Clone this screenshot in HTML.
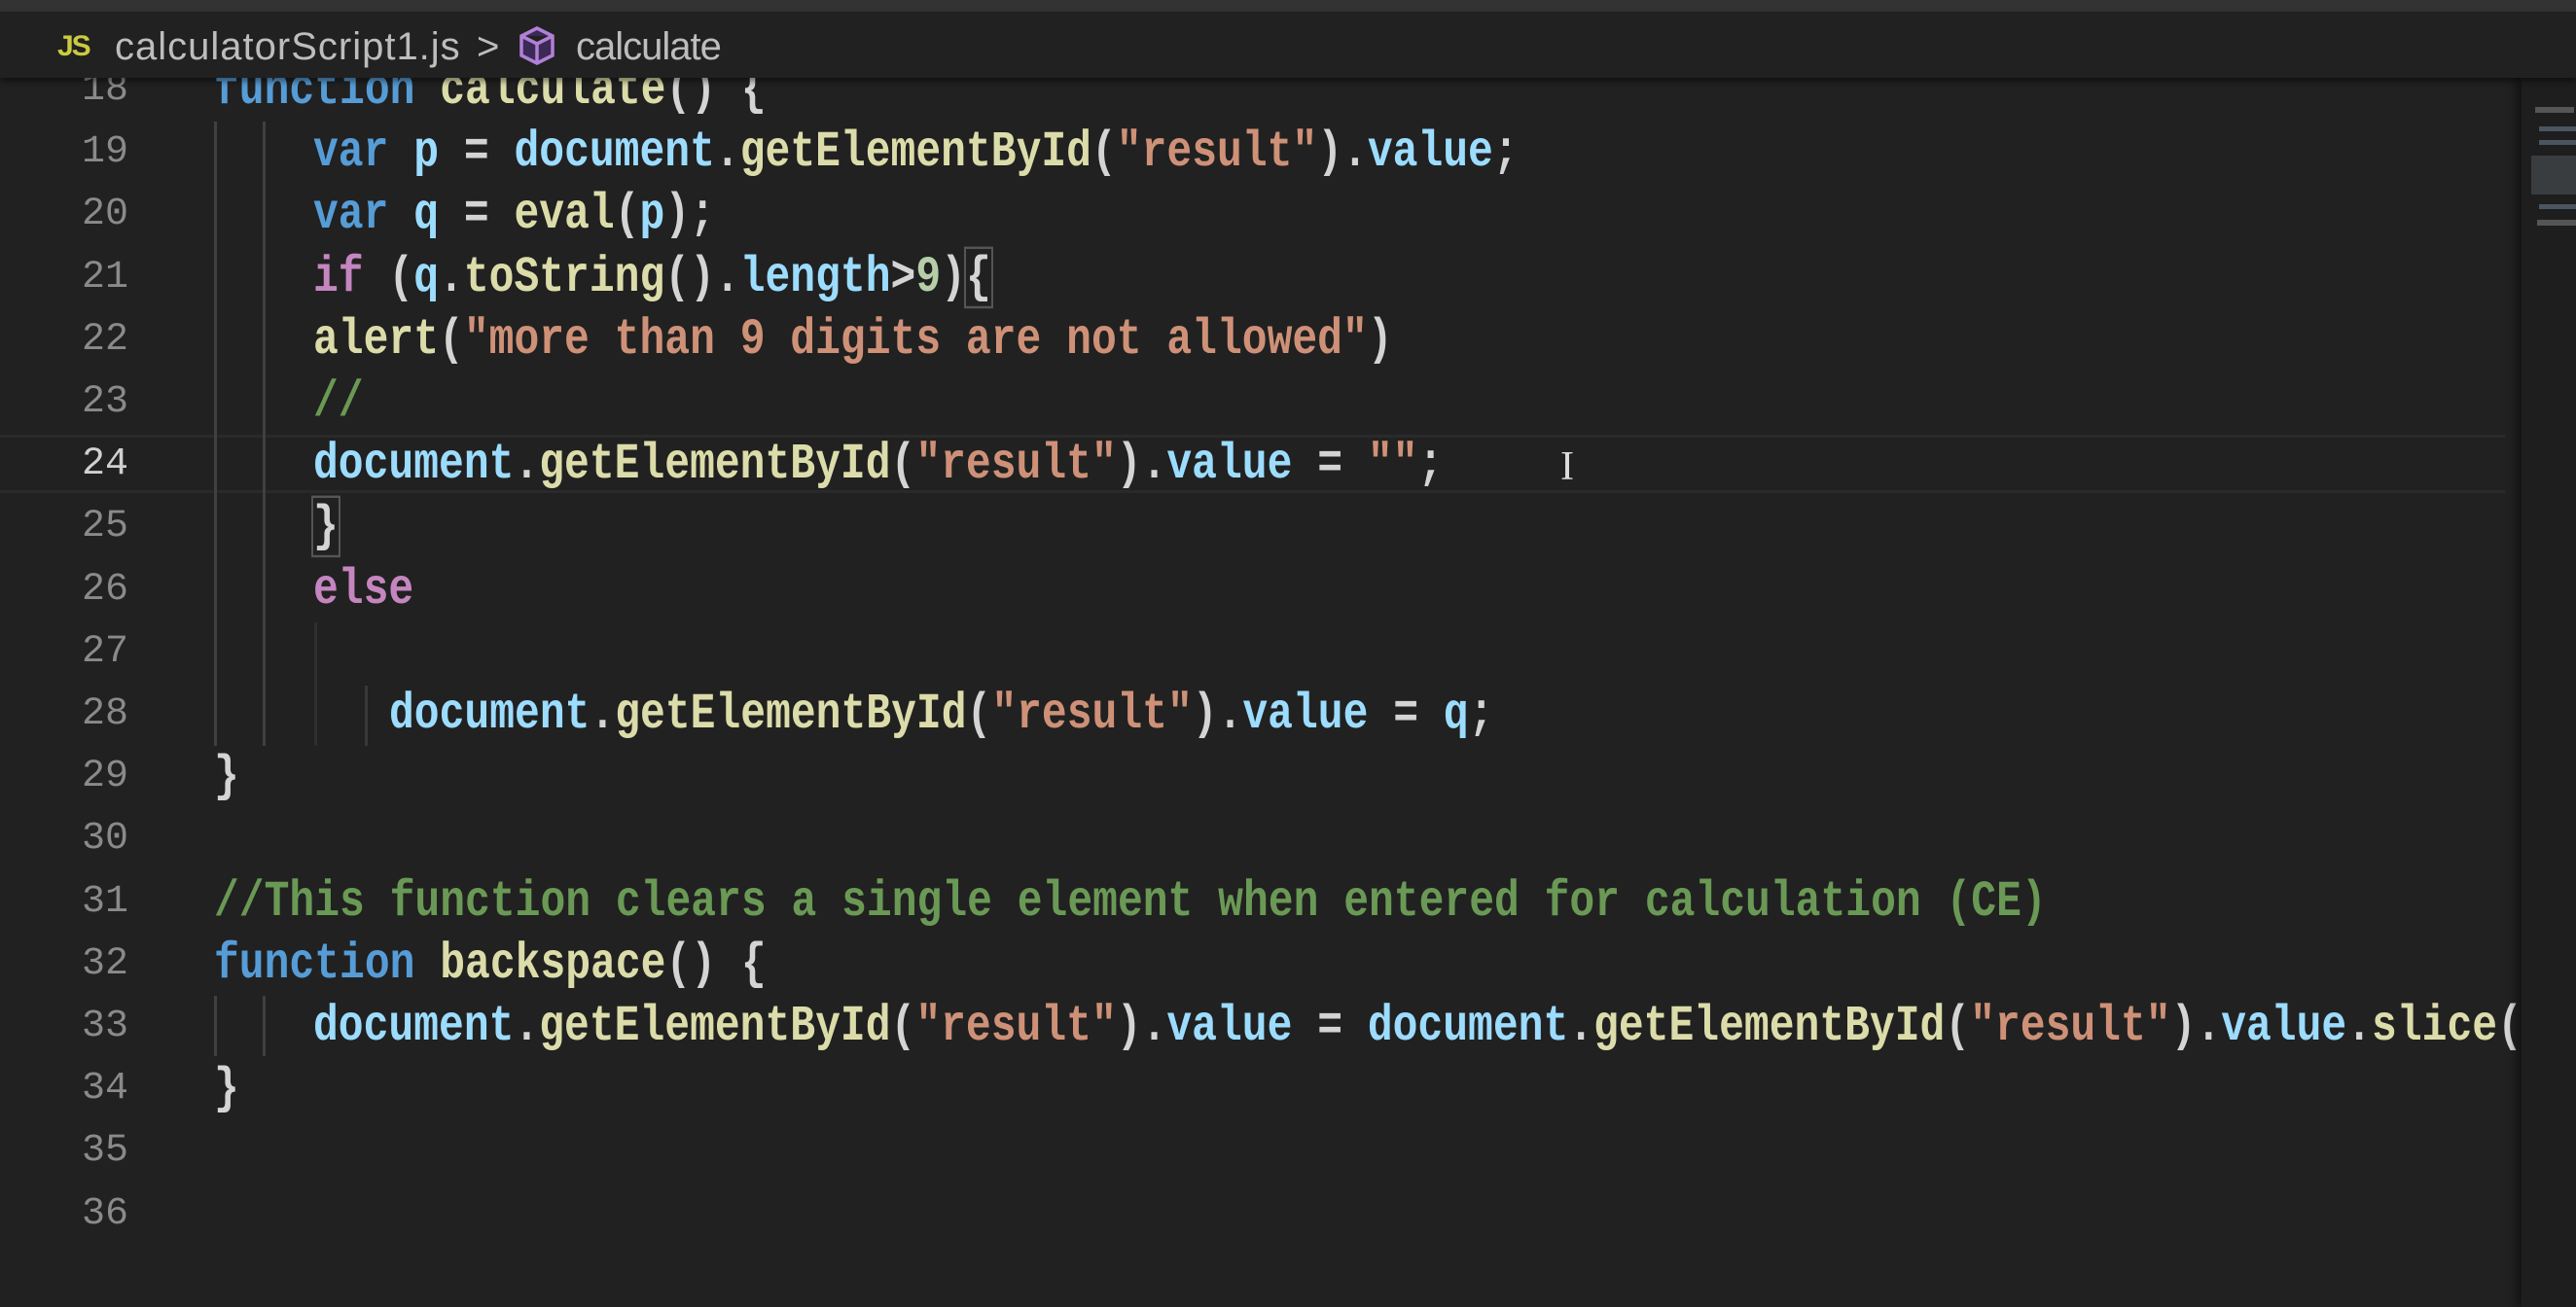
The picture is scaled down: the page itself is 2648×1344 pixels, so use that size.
<!DOCTYPE html>
<html><head><meta charset="utf-8"><style>
html,body{margin:0;padding:0;width:2648px;height:1344px;overflow:hidden;background:#212121;}
.top{position:absolute;left:0;top:0;width:2648px;height:12px;background:#333;}
.bc{position:absolute;left:0;top:12px;width:2648px;height:68px;background:#212121;box-shadow:0 4px 6px rgba(0,0,0,0.45);z-index:5;font-family:"Liberation Sans",sans-serif;font-size:40px;color:#bdbdbd;}
.bc span{position:absolute;top:14px;letter-spacing:-1px;}
.ln{position:absolute;left:0;width:132px;text-align:right;font-family:"Liberation Mono",monospace;font-size:40px;color:#8a8a8a;height:64px;line-height:64px;}
.c{position:absolute;font-family:"Liberation Mono",monospace;font-weight:bold;font-size:43px;height:64px;line-height:64px;white-space:pre;color:#d4d4d4;transform:scaleY(1.2);transform-origin:0 50%;}
.k{color:#569cd6}.v{color:#9cdcfe}.f{color:#dcdcaa}.s{color:#ce9178}.m{color:#6a9955}.p{color:#c586c0}.n{color:#b5cea8}
.g{position:absolute;width:3px;background:#404040;}
.cur{position:absolute;left:0;top:447px;width:2575px;height:60px;border-top:3px solid #2a2a2a;border-bottom:3px solid #2a2a2a;box-sizing:border-box;}
.mini{position:absolute;left:2592px;top:80px;width:56px;height:1264px;background:#1e1e1e;box-shadow:-6px 0 8px rgba(0,0,0,0.4);}
</style></head><body>
<div class="top"></div>
<div class="bc">
<span style="left:59px;color:#cbcb41;font-weight:bold;font-size:30px;top:19px;letter-spacing:-2px">JS</span>
<span style="left:118px;letter-spacing:1px">calculatorScript1.js</span>
<span style="left:490px;">&gt;</span>
<svg style="position:absolute;left:532px;top:14px" width="40" height="42" viewBox="0 0 40 42"><path d="M20 3 L36 11 L36 31 L20 39 L4 31 L4 11 Z M4 11 L20 19 L36 11 M20 19 L20 39" fill="#3a2a55" stroke="#b180d7" stroke-width="3.5"/></svg>
<span style="left:592px;">calculate</span>
</div>
<div class="cur"></div>
<div class="g" style="left:220px;top:125px;height:642px"></div>
<div class="g" style="left:270px;top:125px;height:642px"></div>
<div class="g" style="left:323px;top:640px;height:127px;background:#2e2e2e"></div>
<div class="g" style="left:375px;top:705px;height:62px;background:#383838"></div>
<div class="g" style="left:220px;top:1024px;height:62px"></div>
<div class="g" style="left:270px;top:1024px;height:62px"></div>

<div class="ln" style="top:61px">18</div>
<div class="ln" style="top:125px">19</div>
<div class="ln" style="top:189px">20</div>
<div class="ln" style="top:254px">21</div>
<div class="ln" style="top:318px">22</div>
<div class="ln" style="top:382px">23</div>
<div class="ln" style="top:446px;color:#d0d0d0">24</div>
<div class="ln" style="top:510px">25</div>
<div class="ln" style="top:575px">26</div>
<div class="ln" style="top:639px">27</div>
<div class="ln" style="top:703px">28</div>
<div class="ln" style="top:767px">29</div>
<div class="ln" style="top:831px">30</div>
<div class="ln" style="top:896px">31</div>
<div class="ln" style="top:960px">32</div>
<div class="ln" style="top:1024px">33</div>
<div class="ln" style="top:1088px">34</div>
<div class="ln" style="top:1152px">35</div>
<div class="ln" style="top:1217px">36</div>

<div class="c" style="left:220px;top:61px"><span class="k">function</span> <span class="f">calculate</span>() {</div>
<div class="c" style="left:322px;top:125px"><span class="k">var</span> <span class="v">p</span> = <span class="v">document</span>.<span class="f">getElementById</span>(<span class="s">"result"</span>).<span class="v">value</span>;</div>
<div class="c" style="left:322px;top:189px"><span class="k">var</span> <span class="v">q</span> = <span class="f">eval</span>(<span class="v">p</span>);</div>
<div class="c" style="left:322px;top:254px"><span class="p">if</span> (<span class="v">q</span>.<span class="f">toString</span>().<span class="v">length</span>&gt;<span class="n">9</span>)<span style="outline:2px solid #555">{</span></div>
<div class="c" style="left:322px;top:318px"><span class="f">alert</span>(<span class="s">"more than 9 digits are not allowed"</span>)</div>
<div class="c" style="left:322px;top:382px"><span class="m">//</span></div>
<div class="c" style="left:322px;top:446px"><span class="v">document</span>.<span class="f">getElementById</span>(<span class="s">"result"</span>).<span class="v">value</span> = <span class="s">""</span>;</div>
<div class="c" style="left:322px;top:510px"><span style="outline:2px solid #555">}</span></div>
<div class="c" style="left:322px;top:575px"><span class="p">else</span></div>
<div class="c" style="left:400px;top:703px"><span class="v">document</span>.<span class="f">getElementById</span>(<span class="s">"result"</span>).<span class="v">value</span> = <span class="v">q</span>;</div>
<div class="c" style="left:220px;top:767px">}</div>
<div class="c" style="left:220px;top:896px"><span class="m">//This function clears a single element when entered for calculation (CE)</span></div>
<div class="c" style="left:220px;top:960px"><span class="k">function</span> <span class="f">backspace</span>() {</div>
<div class="c" style="left:322px;top:1024px"><span class="v">document</span>.<span class="f">getElementById</span>(<span class="s">"result"</span>).<span class="v">value</span> = <span class="v">document</span>.<span class="f">getElementById</span>(<span class="s">"result"</span>).<span class="v">value</span>.<span class="f">slice</span>(</div>
<div class="c" style="left:220px;top:1088px">}</div>

<div style="position:absolute;left:1604px;top:456px;font-family:'Liberation Serif',serif;font-size:42px;color:#ddd;">I</div>
<div class="mini">
<div style="position:absolute;left:14px;top:30px;width:40px;height:6px;background:#555"></div>
<div style="position:absolute;left:18px;top:50px;width:38px;height:5px;background:#4a5560"></div>
<div style="position:absolute;left:18px;top:64px;width:38px;height:5px;background:#4a5560"></div>
<div style="position:absolute;left:10px;top:80px;width:46px;height:40px;background:#3a3d40"></div>
<div style="position:absolute;left:18px;top:130px;width:38px;height:5px;background:#4a5560"></div>
<div style="position:absolute;left:16px;top:146px;width:40px;height:6px;background:#555"></div>
</div>
</body></html>
